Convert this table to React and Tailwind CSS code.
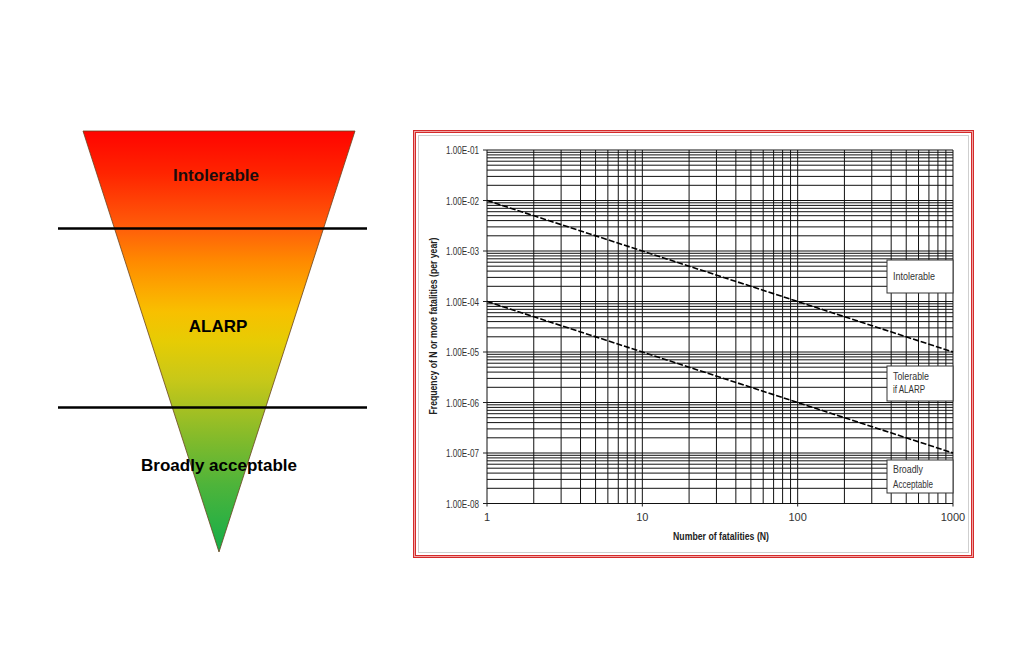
import React from "react";

const FONT = "'Liberation Sans', Arial, sans-serif";

const X0 = 487;
const DX = 155.33;
const Y0 = 150;
const DY = 50.5;
const xOf = (n) => X0 + Math.log10(n) * DX;
const yOf = (v) => Y0 + (-1 - Math.log10(v)) * DY;

function Pyramid() {
  return (
    <svg viewBox="50 120 330 440" className="w-[330px] h-[440px] shrink-0" style={{ fontFamily: FONT }}>
      <defs>
        <linearGradient id="tri" x1="0" y1="131" x2="0" y2="552" gradientUnits="userSpaceOnUse">
          <stop offset="0" stopColor="#ff0400" />
          <stop offset="0.1" stopColor="#ff2400" />
          <stop offset="0.23" stopColor="#ff5e0a" />
          <stop offset="0.31" stopColor="#ff8a00" />
          <stop offset="0.38" stopColor="#fcaa00" />
          <stop offset="0.43" stopColor="#f8c000" />
          <stop offset="0.5" stopColor="#e6cc04" />
          <stop offset="0.59" stopColor="#c8c818" />
          <stop offset="0.66" stopColor="#a6c022" />
          <stop offset="0.74" stopColor="#7eba2c" />
          <stop offset="0.84" stopColor="#4eb43a" />
          <stop offset="1" stopColor="#14ae4a" />
        </linearGradient>
      </defs>
      <polygon points="83,131 355,131 219,552" fill="url(#tri)" stroke="#6a4420" strokeWidth="0.8" />
      <line x1="58" y1="228.5" x2="367" y2="228.5" stroke="#000" strokeWidth="2.5" />
      <line x1="58" y1="407.5" x2="367" y2="407.5" stroke="#000" strokeWidth="2.5" />
      <text x="216" y="181" textAnchor="middle" fontSize="17" fontWeight="700" fill="#1a0c0c">Intolerable</text>
      <text x="218" y="332" textAnchor="middle" fontSize="17" fontWeight="700" fill="#000">ALARP</text>
      <text x="219" y="471" textAnchor="middle" fontSize="17" fontWeight="700" fill="#000">Broadly acceptable</text>
    </svg>
  );
}

function FNChart() {
  const vLines = [];
  for (let d = 0; d < 3; d++) {
    for (let k = 1; k <= 9; k++) vLines.push(k * Math.pow(10, d));
  }
  vLines.push(1000);
  const hLines = [];
  for (let d = -8; d < -1; d++) {
    for (let k = 1; k <= 9; k++) hLines.push(k * Math.pow(10, d));
  }
  hLines.push(0.1);
  const yTop = yOf(0.1);
  const yBot = yOf(1e-8);
  const xL = xOf(1);
  const xR = xOf(1000);
  const majorsY = [-1, -2, -3, -4, -5, -6, -7, -8];
  const majorsX = [1, 10, 100, 1000];

  const Box = ({ y1, y2, lines }) => (
    <g>
      <rect x="887" y={y1} width="66" height={y2 - y1} fill="#fff" stroke="#333" strokeWidth="1" />
      {lines.map((t, i) => (
        <text key={i} x="893" y={t.y} fontSize="10.5" fill="#333" textLength={t.w} lengthAdjust="spacingAndGlyphs">
          {t.s}
        </text>
      ))}
    </g>
  );

  return (
    <svg viewBox="419 136 549 416" className="w-[549px] h-[416px] block" style={{ fontFamily: FONT }}>
      {hLines.map((v, i) => (
        <line key={"h" + i} x1={xL} x2={xR} y1={yOf(v)} y2={yOf(v)} stroke="#111" strokeWidth="1" />
      ))}
      {vLines.map((n, i) => (
        <line key={"v" + i} x1={xOf(n)} x2={xOf(n)} y1={yTop} y2={yBot} stroke="#111" strokeWidth="1" />
      ))}
      {majorsY.map((e) => (
        <line key={"ty" + e} x1={xL - 4} x2={xL} y1={yOf(Math.pow(10, e))} y2={yOf(Math.pow(10, e))} stroke="#222" strokeWidth="1" />
      ))}
      {majorsX.map((n) => (
        <line key={"tx" + n} x1={xOf(n)} x2={xOf(n)} y1={yBot} y2={yBot + 3} stroke="#222" strokeWidth="1" />
      ))}
      <line x1={xL} y1={yOf(1e-2)} x2={xR} y2={yOf(1e-5)} stroke="#000" strokeWidth="1.6" strokeDasharray="6 2" />
      <line x1={xL} y1={yOf(1e-4)} x2={xR} y2={yOf(1e-7)} stroke="#000" strokeWidth="1.6" strokeDasharray="6 2" />

      {majorsY.map((e) => (
        <text
          key={"ly" + e}
          x="479"
          y={yOf(Math.pow(10, e)) + 4}
          textAnchor="end"
          fontSize="11"
          fill="#333"
          textLength="33"
          lengthAdjust="spacingAndGlyphs"
        >
          {"1.00E-0" + -e}
        </text>
      ))}
      {majorsX.map((n) => (
        <text key={"lx" + n} x={xOf(n)} y="521" textAnchor="middle" fontSize="11" fill="#333">
          {n}
        </text>
      ))}

      <Box y1={260} y2={293} lines={[{ s: "Intolerable", y: 280, w: 42 }]} />
      <Box
        y1={366}
        y2={401}
        lines={[
          { s: "Tolerable", y: 380, w: 36 },
          { s: "if ALARP", y: 393, w: 32 },
        ]}
      />
      <Box
        y1={460}
        y2={493}
        lines={[
          { s: "Broadly", y: 473, w: 30 },
          { s: "Acceptable", y: 488, w: 40 },
        ]}
      />

      <text x="721" y="540" textAnchor="middle" fontSize="10.5" fontWeight="700" fill="#222" textLength="96" lengthAdjust="spacingAndGlyphs">
        Number of fatalities (N)
      </text>
      <text
        x="433"
        y="326"
        transform="rotate(-90 433 326)"
        dy="3.5"
        textAnchor="middle"
        fontSize="10.5"
        fontWeight="700"
        fill="#222"
        textLength="177"
        lengthAdjust="spacingAndGlyphs"
      >
        Frequency of N or more fatalities (per year)
      </text>
    </svg>
  );
}

export default function App() {
  return (
    <div className="w-[1024px] h-[666px] bg-white overflow-hidden flex items-start pt-[120px] pl-[50px]">
      <Pyramid />
      <div className="ml-[33px] mt-[10px] w-[561px] h-[428px] border border-[#d42a2a] bg-[#efa4a4] p-[1px]">
        <div className="w-full h-full border border-[#d42a2a] bg-white p-[2px]">
          <div className="w-full h-full border border-[#cfcfcf] bg-white">
            <FNChart />
          </div>
        </div>
      </div>
    </div>
  );
}
